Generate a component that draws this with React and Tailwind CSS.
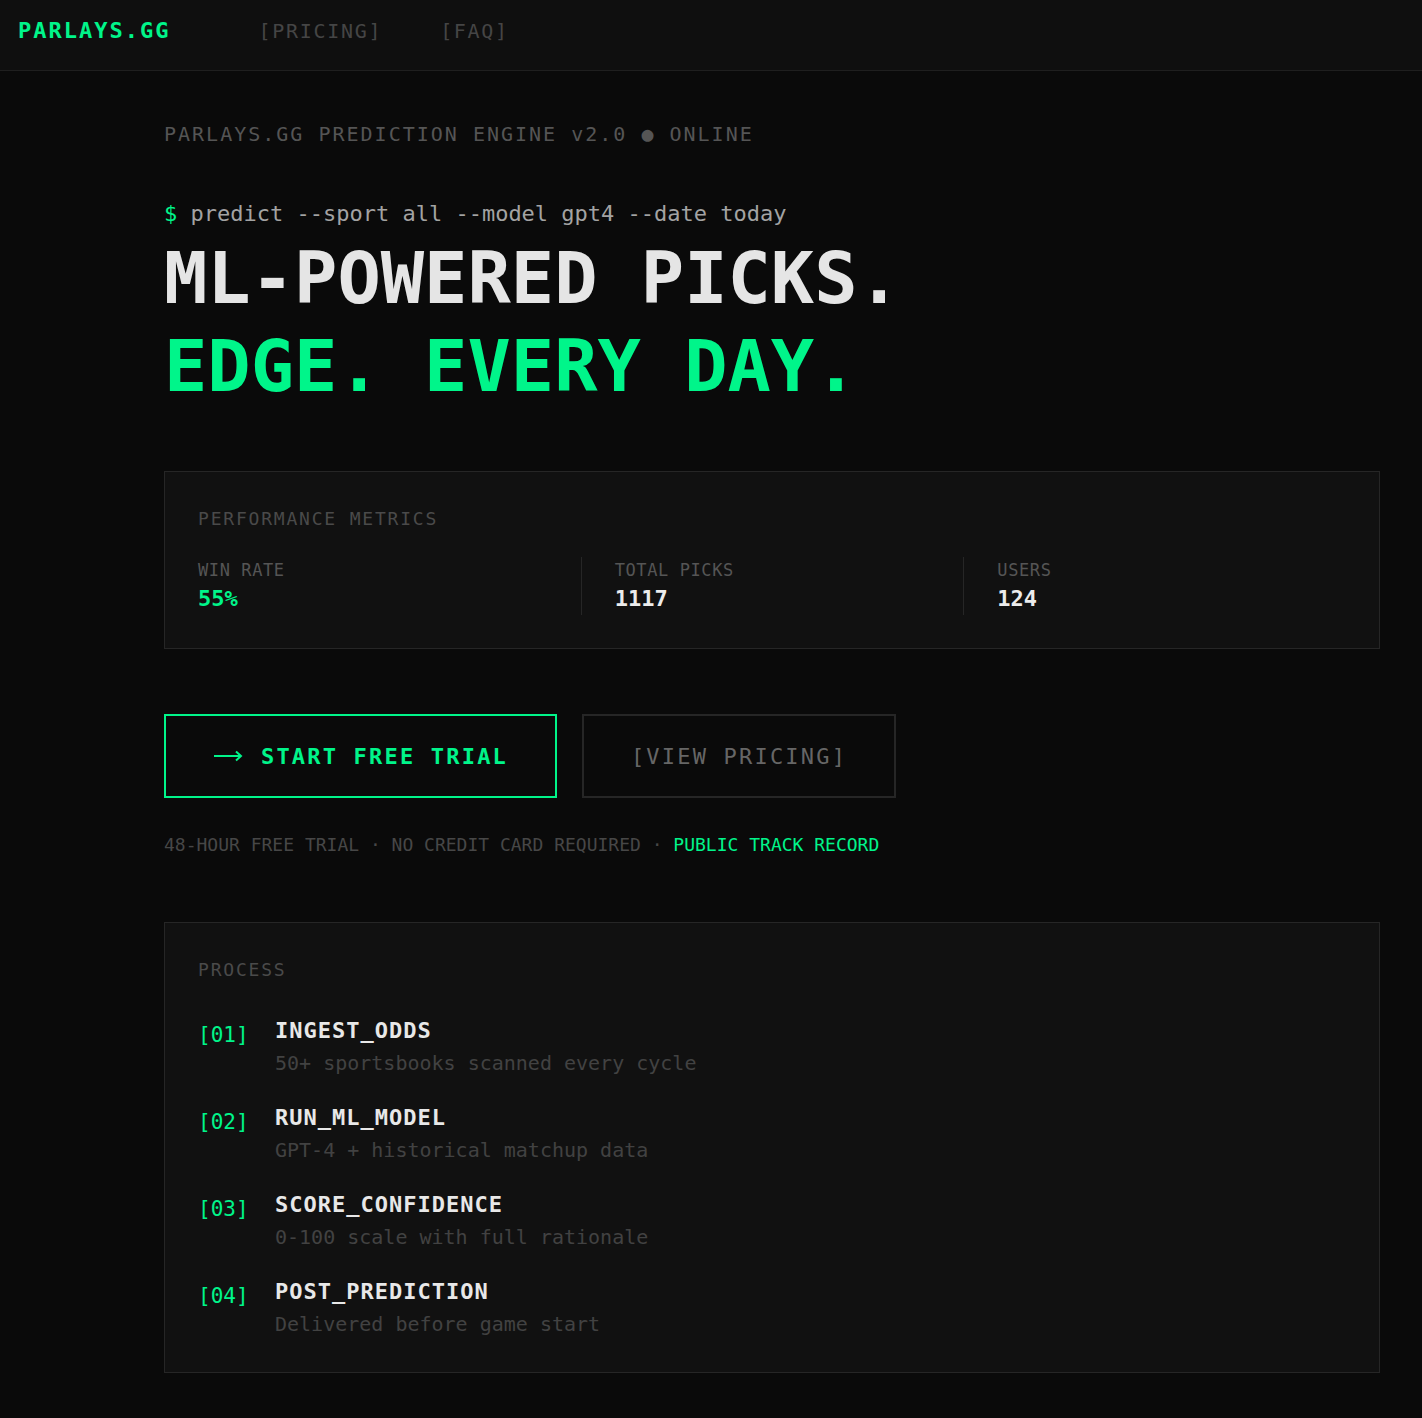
import React from 'react';

const steps = [
  { id: '01', title: 'INGEST_ODDS', desc: '50+ sportsbooks scanned every cycle' },
  { id: '02', title: 'RUN_ML_MODEL', desc: 'GPT-4 + historical matchup data' },
  { id: '03', title: 'SCORE_CONFIDENCE', desc: '0-100 scale with full rationale' },
  { id: '04', title: 'POST_PREDICTION', desc: 'Delivered before game start' },
];

const metrics = [
  { label: 'WIN RATE', value: '55%', green: true },
  { label: 'TOTAL PICKS', value: '1117' },
  { label: 'USERS', value: '124' },
];

const Arrow = () => (
  <svg width="30" height="12" viewBox="0 0 30 12" fill="none">
    <path d="M1 6H28M23 1.5L28 6L23 10.5" stroke="#00f58a" strokeWidth="2" />
  </svg>
);

export default function App() {
  return (
    <div className="min-h-screen bg-[#0a0a0a] font-['DejaVu_Sans_Mono',monospace]">
      <nav className="h-[71px] border-b border-[#1f1f1f] bg-[#0f0f0f] flex items-start pt-4 px-[18px]">
        <span className="text-[22px] leading-[30px] font-bold tracking-[2px] text-[#00f58a]">PARLAYS.GG</span>
        <div className="ml-[88px] flex gap-[58px] text-[20px] leading-[30px] tracking-[1.7px] text-[#454545]">
          <span>[PRICING]</span>
          <span>[FAQ]</span>
        </div>
      </nav>

      <main className="pl-[164px] pr-[42px] pt-[49px] pb-[46px]">
        <div className="text-[20px] leading-[28px] tracking-[2px] text-[#555]">
          PARLAYS.GG PREDICTION ENGINE v2.0 ● ONLINE
        </div>
        <div className="mt-[51px] text-[22px] leading-[30px] text-[#a3a3a3]">
          <span className="text-[#00f58a]">$</span> predict --sport all --model gpt4 --date today
        </div>
        <h1 className="mt-[5px] text-[72px] leading-[88px] font-bold text-[#e5e5e5]">
          <div>ML-POWERED PICKS.</div>
          <div className="text-[#00f58a]">EDGE. EVERY DAY.</div>
        </h1>

        <section className="mt-[61px] border border-[#262626] bg-[#111111] px-[33px] pt-[35px] pb-[33px]">
          <div className="text-[18px] leading-[24px] tracking-[1.8px] text-[#4a4a4a]">PERFORMANCE METRICS</div>
          <div className="mt-[26px] grid grid-cols-3">
            {metrics.map((m, i) => (
              <div key={m.label} className={i > 0 ? 'border-l border-[#262626] pl-[33px]' : ''}>
                <div className="text-[17px] leading-[26px] tracking-[0.6px] text-[#555]">{m.label}</div>
                <div className={`text-[22px] leading-[32px] font-bold ${m.green ? 'text-[#00f58a]' : 'text-[#ececec]'}`}>
                  {m.value}
                </div>
              </div>
            ))}
          </div>
        </section>

        <div className="mt-[65px] flex gap-[25px]">
          <button className="w-[393px] h-[84px] border-2 border-[#00f58a] flex items-center justify-center gap-[18px] text-[22px] font-bold tracking-[2.2px] text-[#00f58a]">
            <Arrow />
            <span>START FREE TRIAL</span>
          </button>
          <button className="w-[314px] h-[84px] border-2 border-[#262626] flex items-center justify-center text-[22px] tracking-[2.2px] text-[#666]">
            [VIEW PRICING]
          </button>
        </div>

        <div className="mt-[35px] text-[18px] leading-[24px] text-[#474747]">
          48-HOUR FREE TRIAL · NO CREDIT CARD REQUIRED · <span className="text-[#00f58a]">PUBLIC TRACK RECORD</span>
        </div>

        <section className="mt-[65px] border border-[#262626] bg-[#111111] px-[33px] pt-[35px] pb-[33px]">
          <div className="text-[18px] leading-[24px] tracking-[1.8px] text-[#4a4a4a]">PROCESS</div>
          <div className="mt-[34px] flex flex-col gap-[25px]">
            {steps.map((s) => (
              <div key={s.id} className="flex">
                <div className="w-[77px] pt-[4px] text-[21px] leading-[30px] text-[#00f58a]">[{s.id}]</div>
                <div>
                  <div className="text-[22px] leading-[30px] font-bold tracking-[1px] text-[#e8e8e8]">{s.title}</div>
                  <div className="mt-[2px] text-[20px] leading-[30px] text-[#424242]">{s.desc}</div>
                </div>
              </div>
            ))}
          </div>
        </section>
      </main>
    </div>
  );
}
